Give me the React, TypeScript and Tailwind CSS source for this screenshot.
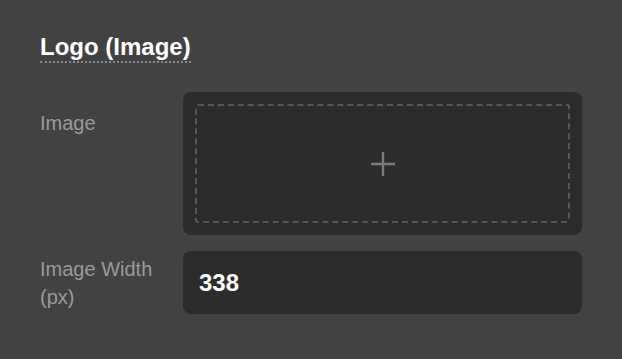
export default function App() {
  return (
    <div
      className="min-h-[359px] w-full bg-[#424242] pl-10 pr-10 pt-[32px] pb-10"
      style={{ fontFamily: '"Liberation Sans", Arial, sans-serif' }}
    >
      <h2 className="inline-block border-b-2 border-dotted border-[#8a8a8a] text-[24px] font-bold leading-[29px] text-white">
        Logo (Image)
      </h2>

      <div className="mt-[29px] flex flex-col gap-4">
        <div className="flex">
          <div className="w-[143px] shrink-0 pt-[17px] text-[20px] leading-[28px] text-[#9a9a9a]">
            Image
          </div>
          <button className="h-[143px] w-[399px] rounded-lg bg-[#2c2c2c] p-3">
            <div className="flex h-full w-full items-center justify-center rounded-[3px] border-2 border-dashed border-[#575757]">
              <svg width="24" height="24" viewBox="0 0 24 24" fill="none" stroke="#7a7a7a" strokeWidth="2.4">
                <path d="M12 0v24M0 12h24" />
              </svg>
            </div>
          </button>
        </div>

        <div className="flex">
          <div className="w-[143px] shrink-0 pt-[4px] pr-6 text-[20px] leading-[28px] text-[#9a9a9a]">
            Image Width (px)
          </div>
          <div className="flex h-[63px] w-[399px] items-center rounded-lg bg-[#2c2c2c] pl-4 text-[24px] font-bold text-white">
            338
          </div>
        </div>
      </div>
    </div>
  );
}
